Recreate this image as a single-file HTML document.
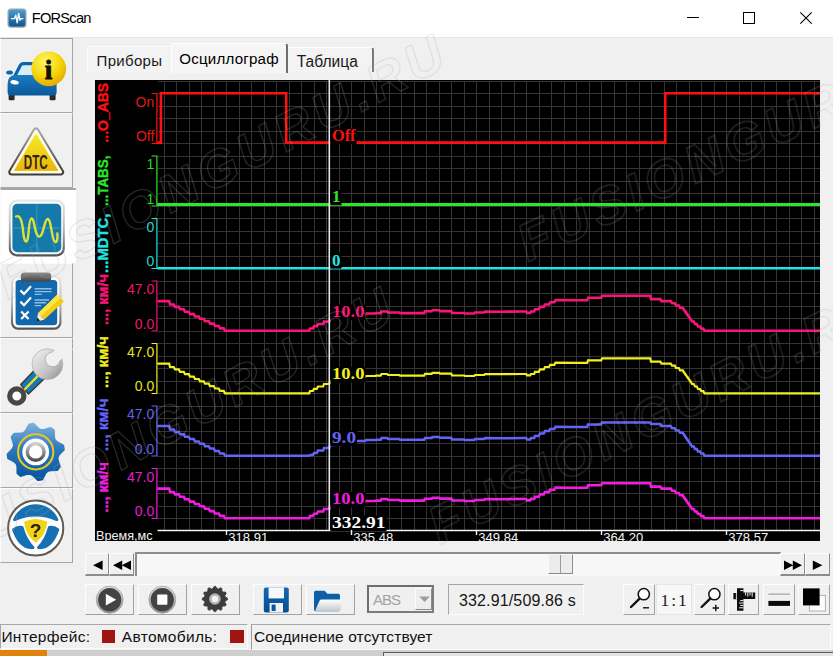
<!DOCTYPE html>
<html lang="ru">
<head>
<meta charset="utf-8">
<title>FORScan</title>
<style>
*{box-sizing:border-box;margin:0;padding:0}
html,body{width:833px;height:656px;overflow:hidden;background:#f0f0f0}
body{position:relative;font-family:"Liberation Sans",sans-serif;font-size:15px;color:#000}
.abs{position:absolute}
#titlebar{left:0;top:0;width:833px;height:37px;background:#fff}
#title{left:31.8px;top:9.6px;font-size:14.6px;line-height:17px;letter-spacing:-.75px;white-space:nowrap}
.sb{left:0;width:73px;height:75px;background:#f0f0f0;border-right:1.5px solid #a6a6a6;border-bottom:1.5px solid #a6a6a6;border-top:1px solid #fbfbfb;border-left:1px solid #fbfbfb}
.sb.sel{background:#fff;border-top:2px solid #a6a6a6;border-right:none;border-bottom:none;width:76px}
.tab{white-space:nowrap;font-size:15px;line-height:17px}
.tb{height:31px;background:#f0f0f0;border-top:1px solid #fdfdfd;border-left:1px solid #fdfdfd;border-right:1.5px solid #a3a3a3;border-bottom:1.5px solid #a3a3a3}
.sbtn{background:#f0f0f0;border-top:1px solid #fcfcfc;border-left:1px solid #fcfcfc;border-right:1.5px solid #8c8c8c;border-bottom:2px solid #8c8c8c}
.ax{font-family:"Liberation Sans",sans-serif;font-size:14px}
.vt{font-family:"Liberation Sans",sans-serif;font-size:14px;font-weight:bold;stroke-width:.35px}
.val{font-family:"Liberation Serif",serif;font-size:16px;font-weight:bold}
.tm{font-family:"Liberation Sans",sans-serif;font-size:12.5px}
.tm2{font-family:"Liberation Sans",sans-serif;font-size:13.5px}
.st{white-space:nowrap;font-size:15.5px;line-height:18px;color:#111}
</style>
</head>
<body>
<!-- title bar -->
<div id="titlebar" class="abs"></div>
<svg class="abs" style="left:0;top:0" width="833" height="38" viewBox="0 0 833 38">
  <defs>
    <linearGradient id="icg" x1="0" y1="0" x2="0" y2="1"><stop offset="0" stop-color="#4a9bd0"/><stop offset="1" stop-color="#0f5590"/></linearGradient>
  </defs>
  <rect x="7.5" y="8.6" width="19" height="19.2" rx="3.5" fill="#9aa4ae"/>
  <rect x="8.8" y="9.8" width="16.4" height="16.6" rx="2.6" fill="url(#icg)"/>
  <polyline points="11,18.6 14.5,18.6 15.8,15.2 17.2,22.8 18.6,13.4 20,20.2 21,18.6 23.4,18.6" fill="none" stroke="#fff" stroke-width="1.3" stroke-linejoin="round"/>
  <path d="M687 17.5H699" stroke="#000" stroke-width="1"/>
  <rect x="743.5" y="12.5" width="11" height="11" fill="none" stroke="#000" stroke-width="1"/>
  <path d="M800.3 12.3L811.7 23.7M811.7 12.3L800.3 23.7" stroke="#000" stroke-width="1.1"/>
  <rect x="0" y="37" width="833" height="1" fill="#e6e6e6"/>
</svg>
<div id="title" class="abs">FORScan</div>

<!-- sidebar buttons -->
<div class="abs sb" style="top:37.6px;height:75.4px;border-top:1.5px solid #9c9c9c"></div>
<div class="abs sb" style="top:113px"></div>
<div class="abs sb sel" style="top:188px"></div>
<div class="abs sb" style="top:263px"></div>
<div class="abs sb" style="top:338px"></div>
<div class="abs sb" style="top:413px"></div>
<div class="abs sb" style="top:488px"></div>
<svg class="abs" style="left:0;top:38px" width="76" height="526" viewBox="0 38 76 526">
<defs>
  <radialGradient id="yel" cx="0.4" cy="0.3" r="0.75"><stop offset="0" stop-color="#fff66a"/><stop offset="0.55" stop-color="#f6d80c"/><stop offset="1" stop-color="#e2a400"/></radialGradient>
  <linearGradient id="carb" x1="0" y1="0" x2="0" y2="1"><stop offset="0" stop-color="#1a7cc0"/><stop offset="1" stop-color="#0a589c"/></linearGradient>
  <linearGradient id="trio" x1="0" y1="0" x2="0" y2="1"><stop offset="0" stop-color="#a4a4aa"/><stop offset="1" stop-color="#3c3c40"/></linearGradient>
  <linearGradient id="tri" x1="0" y1="0" x2="0" y2="1"><stop offset="0" stop-color="#f6ec24"/><stop offset="1" stop-color="#eab40c"/></linearGradient>
  <linearGradient id="silv" x1="0" y1="0" x2="0" y2="1"><stop offset="0" stop-color="#e8e8e8"/><stop offset="0.5" stop-color="#b8b8b8"/><stop offset="1" stop-color="#505050"/></linearGradient>
  <linearGradient id="gearb" x1="0" y1="0" x2="0" y2="1"><stop offset="0" stop-color="#7ab0dc"/><stop offset="0.45" stop-color="#2a78bc"/><stop offset="1" stop-color="#06549c"/></linearGradient>
  <linearGradient id="wr" x1="0" y1="0" x2="1" y2="1"><stop offset="0" stop-color="#f4f4f4"/><stop offset="0.6" stop-color="#c4c4c4"/><stop offset="1" stop-color="#8a8a8a"/></linearGradient>
  <linearGradient id="clipg" x1="0" y1="0" x2="0" y2="1"><stop offset="0" stop-color="#8e8e8e"/><stop offset="1" stop-color="#444"/></linearGradient>
  <linearGradient id="ring" x1="0" y1="0" x2="0" y2="1"><stop offset="0" stop-color="#d0d0d0"/><stop offset="1" stop-color="#505050"/></linearGradient>
</defs>
<!-- 1: car + info -->
<g>
  <path d="M12.5 77 L19 64.5 Q20.2 62 23 62 L41 62 Q43.8 62 45 64.5 L51.5 77 Z" fill="#0d64a8"/>
  <path d="M17 75.5 L21.6 66.4 Q22.2 65.2 23.6 65.2 L40.4 65.2 Q41.8 65.2 42.4 66.4 L47 75.5 Z" fill="#d8eefa"/>
  <ellipse cx="9.6" cy="72.6" rx="3.4" ry="2" fill="#0d64a8"/>
  <rect x="8.6" y="92" width="6" height="8.3" rx="1.2" fill="#2a2a2a"/>
  <rect x="49.6" y="92" width="6" height="8.3" rx="1.2" fill="#2a2a2a"/>
  <path d="M7.6 84 Q7.6 75.5 15 75 L49 75 Q56.6 75.5 56.6 84 L56.6 92.5 Q56.6 95.6 53 95.6 L11 95.6 Q7.6 95.6 7.6 92.5 Z" fill="url(#carb)"/>
  <ellipse cx="14.6" cy="82.3" rx="4.2" ry="2.1" fill="#fff" transform="rotate(8 14.6 82.3)"/>
  <circle cx="48.7" cy="68.8" r="17.4" fill="url(#yel)"/>
  <text x="48.4" y="78.6" text-anchor="middle" font-family="Liberation Serif,serif" font-weight="bold" font-size="27" fill="#151005" stroke="#151005" stroke-width=".9">i</text>
</g>
<!-- 2: DTC triangle -->
<g>
  <path d="M36 131 L60.6 172 L11.8 172 Z" fill="#fffbe0" stroke="url(#trio)" stroke-width="7" stroke-linejoin="round"/>
  <path d="M36 131 L60.6 172 L11.8 172 Z" fill="url(#tri)" stroke="#fffce4" stroke-width="3" stroke-linejoin="round"/>
  <path d="M36 133.4 L58.4 170.8 L14 170.8 Z" fill="url(#tri)"/>
  <text x="35.8" y="168.6" text-anchor="middle" textLength="24" lengthAdjust="spacingAndGlyphs" font-family="Liberation Sans,sans-serif" font-weight="bold" font-size="19.5" fill="#33240c">DTC</text>
</g>
<!-- 3: scope -->
<g>
  <rect x="8.8" y="199.6" width="56" height="56.8" rx="8" fill="url(#silv)"/>
  <rect x="10.8" y="201.8" width="52" height="52.4" rx="6.5" fill="#fdfdfd"/>
  <rect x="12.4" y="203.8" width="48.8" height="48.4" rx="5" fill="#157aaa"/>
  <path d="M36.8 204V252M12.4 228H61.2" stroke="#4aa6c8" stroke-width="1" opacity=".7"/>
  <path d="M16 216.5 C20 214.5 22 221 23 230 C24 241 25.5 242.5 27 241 C29 238 28.5 219 31.5 218.5 C34.5 218 34.5 234.5 38.5 236.5 C43.5 238.5 44 219.5 47.5 219 C51.5 218.5 51.5 241 55.2 242 C57.4 242.5 57.6 238 57.4 233.5" fill="none" stroke="#dce238" stroke-width="2.4" stroke-linecap="round"/>
</g>
<!-- 4: clipboard + pencil -->
<g>
  <rect x="11" y="275.4" width="50.4" height="54.4" rx="7" fill="url(#silv)"/>
  <rect x="13" y="277.6" width="46.4" height="50" rx="5.5" fill="#fdfdfd"/>
  <rect x="15.6" y="280" width="41.6" height="45.2" rx="3.5" fill="#1268ac"/>
  <rect x="20.8" y="272.6" width="30.4" height="9" rx="3.4" fill="url(#clipg)"/>
  <path d="M20.4 290.4l3.6 3.6l7-7.8M20.4 301.6l3.6 3.6l7-7.8M21.2 311.4l7.4 7.6M28.6 311.4l-7.4 7.6" fill="none" stroke="#fff" stroke-width="2.2"/>
  <path d="M34.6 288.8H51.6M34.6 291.6H51.6M34.6 294.4H41.6M34.6 300H49M34.6 302.8H46M34.6 305.6H41" stroke="#8cc0e4" stroke-width="1.4"/>
  <path d="M57.4 294.6 L64 301.4 L44.4 319.6 L38 313.2 Z" fill="#f4cc10"/>
  <path d="M57.4 294.6 L60.6 297.9 L41 316.2 L38 313.2 Z" fill="#fbe54a"/>
  <path d="M38 313.2 L44.4 319.6 L36.6 321.8 Z" fill="#f2ead8"/>
  <path d="M37.3 317.6 L40 320.6 L36.4 322 Z" fill="#1a1a1a"/>
</g>
<!-- 5: wrench -->
<g>
  <path d="M9.4 389.6 L33.6 366.4 L45.6 378 L24.4 402.6 Z" fill="#444" stroke="#444" stroke-width="1" stroke-linejoin="round" opacity="0"/>
  <path d="M20.8 384.6 L36.4 368.2 L45.8 377.2 L28.4 394 Z" fill="#1a78ae" stroke="#3a3a3a" stroke-width="1.5" stroke-linejoin="round"/>
  <path d="M24.4 389.8 L41 372.6" stroke="#e6e02c" stroke-width="2.3"/>
  <circle cx="16.8" cy="396" r="7.1" fill="#fbfbfb" stroke="#474747" stroke-width="5.2"/>
  <circle cx="47.4" cy="364.2" r="15.4" fill="url(#wr)" stroke="#adadad" stroke-width=".7"/>
  <circle cx="52.6" cy="359.4" r="7.4" fill="#f0f0f0" stroke="#a6a6a6" stroke-width=".8"/>
  <path d="M56.1 363.5L72.9 349.4L66.0 341.1L49.1 355.3Z" fill="#f0f0f0"/>
</g>
<!-- 6: gear -->
<g>
    <path d="M24.1 433.0 L26.3 430.7 L29.4 424.7 L33.3 424.1 L38.1 428.8 L40.9 430.3 L44.0 430.2 L50.5 428.2 L53.6 430.5 L53.7 437.3 L54.6 440.3 L56.9 442.5 L62.9 445.6 L63.5 449.5 L58.8 454.3 L57.3 457.1 L57.4 460.2 L59.4 466.7 L57.1 469.8 L50.3 469.9 L47.3 470.8 L45.1 473.1 L42.0 479.1 L38.1 479.7 L33.3 475.0 L30.5 473.5 L27.4 473.6 L20.9 475.6 L17.8 473.3 L17.7 466.5 L16.8 463.5 L14.5 461.3 L8.5 458.2 L7.9 454.3 L12.6 449.5 L14.1 446.7 L14.0 443.6 L12.0 437.1 L14.3 434.0 L21.1 433.9Z" fill="url(#gearb)" stroke="url(#gearb)" stroke-width="2.6" stroke-linejoin="round"/>
  <circle cx="35.7" cy="451.9" r="17.6" fill="none" stroke="#e8c428" stroke-width="2.1"/>
  <circle cx="35.7" cy="451.9" r="13.4" fill="#fafcff"/>
  <circle cx="35.7" cy="451.9" r="8.4" fill="#fdfdfd" stroke="url(#ring)" stroke-width="3.4"/>
</g>
<!-- 7: steering wheel -->
<g>
  <circle cx="35.7" cy="528" r="27.6" fill="#fdfdfd" stroke="#5e5854" stroke-width="2"/>
  <path d="M14.6 519.6 A23 23 0 0 1 56.8 519.6 Q36 510.4 14.6 519.6 Z" fill="#1570b4" stroke="#1570b4" stroke-width="3" stroke-linejoin="round"/>
  <path d="M13.6 529.6 Q17.5 526.4 22 527.4 Q25.5 540 33 547.6 Q20 548.6 13.6 529.6 Z" fill="#1570b4" stroke="#1570b4" stroke-width="3" stroke-linejoin="round"/>
  <path d="M57.8 529.6 Q54 526.4 49.4 527.4 Q46 540 38.6 547.6 Q51.4 548.6 57.8 529.6 Z" fill="#1570b4" stroke="#1570b4" stroke-width="3" stroke-linejoin="round"/>
  <path d="M25.2 522.4 Q35.7 517.4 46.2 522.4 Q44.6 534.6 35.7 541.4 Q26.8 534.6 25.2 522.4 Z" fill="#f2d416" stroke="#f2d416" stroke-width="2" stroke-linejoin="round"/>
  <text x="35.6" y="536.8" text-anchor="middle" font-family="Liberation Sans,sans-serif" font-weight="bold" font-size="19" fill="#2a2008">?</text>
</g>
</svg>


<!-- tabs -->
<div class="abs" style="left:87px;top:46px;width:84px;height:26px;background:#f3f3f3;border-top:1.5px solid #fdfdfd;border-left:1.5px solid #fdfdfd;border-radius:3px 0 0 0"></div>
<div class="abs" style="left:288px;top:46.5px;width:86px;height:25px;background:#f3f3f3;border-top:1.5px solid #fdfdfd;border-right:2px solid #7a7a7a;border-radius:0 3px 0 0"></div>
<div class="abs" style="left:170.5px;top:42.5px;width:117.5px;height:30px;background:#f5f5f5;border-top:1.5px solid #fff;border-left:1.5px solid #fff;border-right:2px solid #6e6e6e;border-radius:3px 3px 0 0"></div>
<div class="abs tab" style="left:96.6px;top:51.6px;color:#1a1a1a;letter-spacing:.3px">Приборы</div>
<div class="abs tab" style="left:179.2px;top:50.3px;font-size:15.1px;letter-spacing:.22px">Осциллограф</div>
<div class="abs tab" style="left:296.8px;top:53.2px;font-size:15.6px;color:#1a1a1a">Таблица</div>

<svg id="chart" width="725" height="461" viewBox="95 80 725 461" style="position:absolute;left:95px;top:80px">
<rect x="95" y="80" width="725" height="461" fill="#000"/>
<path d="M164.0 81V530.5M176.5 81V530.5M189.0 81V530.5M201.5 81V530.5M214.0 81V530.5M226.5 81V530.5M239.0 81V530.5M251.5 81V530.5M264.0 81V530.5M276.5 81V530.5M289.0 81V530.5M301.5 81V530.5M314.0 81V530.5M326.5 81V530.5M339.0 81V530.5M351.5 81V530.5M364.0 81V530.5M376.5 81V530.5M389.0 81V530.5M401.5 81V530.5M414.0 81V530.5M426.5 81V530.5M439.0 81V530.5M451.5 81V530.5M464.0 81V530.5M476.5 81V530.5M489.0 81V530.5M501.5 81V530.5M514.0 81V530.5M526.5 81V530.5M539.0 81V530.5M551.5 81V530.5M564.0 81V530.5M576.5 81V530.5M589.0 81V530.5M601.5 81V530.5M614.0 81V530.5M626.5 81V530.5M639.0 81V530.5M651.5 81V530.5M664.0 81V530.5M676.5 81V530.5M689.0 81V530.5M701.5 81V530.5M714.0 81V530.5M726.5 81V530.5M739.0 81V530.5M751.5 81V530.5M764.0 81V530.5M776.5 81V530.5M789.0 81V530.5M801.5 81V530.5M814.0 81V530.5M158 81.00H820M158 93.50H820M158 106.00H820M158 118.50H820M158 131.00H820M158 143.50H820M158 156.00H820M158 168.50H820M158 181.00H820M158 193.50H820M158 206.00H820M158 218.50H820M158 231.00H820M158 243.50H820M158 256.00H820M158 268.50H820M158 281.00H820M158 293.50H820M158 306.00H820M158 318.50H820M158 331.00H820M158 343.50H820M158 356.00H820M158 368.50H820M158 381.00H820M158 393.50H820M158 406.00H820M158 418.50H820M158 431.00H820M158 443.50H820M158 456.00H820M158 468.50H820M158 481.00H820M158 493.50H820M158 506.00H820M158 518.50H820M158 531.00H820" stroke="#343434" stroke-width="1" fill="none" shape-rendering="crispEdges"/>
<path d="M151.5 93.5H156.9V143.5H151.5" stroke="#ff1010" stroke-width="1.2" fill="none"/>
<text x="154.3" y="106.9" text-anchor="end" fill="#e01818" class="ax">On</text>
<text x="154.3" y="141.0" text-anchor="end" fill="#e01818" class="ax">Off</text>
<path d="M151.5 156H156.9V206H151.5" stroke="#28e828" stroke-width="1.2" fill="none"/>
<text x="154.3" y="169.4" text-anchor="end" fill="#28d828" class="ax">1</text>
<text x="154.3" y="203.5" text-anchor="end" fill="#28d828" class="ax">1</text>
<path d="M151.5 218.5H156.9V268.5H151.5" stroke="#20e4e4" stroke-width="1.2" fill="none"/>
<text x="154.3" y="231.9" text-anchor="end" fill="#20d4d4" class="ax">0</text>
<text x="154.3" y="266.0" text-anchor="end" fill="#20d4d4" class="ax">0</text>
<path d="M151.5 281H156.9V331H151.5" stroke="#f81478" stroke-width="1.2" fill="none"/>
<text x="154.3" y="294.4" text-anchor="end" fill="#e8186c" class="ax">47.0</text>
<text x="154.3" y="328.5" text-anchor="end" fill="#e8186c" class="ax">0.0</text>
<path d="M151.5 343.5H156.9V393.5H151.5" stroke="#f0f020" stroke-width="1.2" fill="none"/>
<text x="154.3" y="356.9" text-anchor="end" fill="#e4e420" class="ax">47.0</text>
<text x="154.3" y="391.0" text-anchor="end" fill="#e4e420" class="ax">0.0</text>
<path d="M151.5 406H156.9V456H151.5" stroke="#6464f4" stroke-width="1.2" fill="none"/>
<text x="154.3" y="419.4" text-anchor="end" fill="#6060e8" class="ax">47.0</text>
<text x="154.3" y="453.5" text-anchor="end" fill="#6060e8" class="ax">0.0</text>
<path d="M151.5 468.5H156.9V518.5H151.5" stroke="#f01ce0" stroke-width="1.2" fill="none"/>
<text x="154.3" y="481.9" text-anchor="end" fill="#e41cd4" class="ax">47.0</text>
<text x="154.3" y="516.0" text-anchor="end" fill="#e41cd4" class="ax">0.0</text>
<text transform="translate(107.6 142.5) rotate(-90)" textLength="59.5" lengthAdjust="spacingAndGlyphs" fill="#ff1010" stroke="#ff1010" class="vt">...O_ABS</text>
<text transform="translate(107.6 206) rotate(-90)" textLength="50.5" lengthAdjust="spacingAndGlyphs" fill="#28e828" stroke="#28e828" class="vt">...TABS,</text>
<text transform="translate(107.6 273) rotate(-90)" textLength="59.5" lengthAdjust="spacingAndGlyphs" fill="#20e4e4" stroke="#20e4e4" class="vt">...MDTC,</text>
<text transform="translate(107.6 325) rotate(-90)" textLength="51.0" lengthAdjust="spacingAndGlyphs" fill="#f81478" stroke="#f81478" class="vt">..., км/ч</text>
<text transform="translate(107.6 388) rotate(-90)" textLength="52.0" lengthAdjust="spacingAndGlyphs" fill="#f0f020" stroke="#f0f020" class="vt">..., км/ч</text>
<text transform="translate(107.6 451) rotate(-90)" textLength="52.5" lengthAdjust="spacingAndGlyphs" fill="#6464f4" stroke="#6464f4" class="vt">..., км/ч</text>
<text transform="translate(107.6 512.5) rotate(-90)" textLength="50.5" lengthAdjust="spacingAndGlyphs" fill="#f01ce0" stroke="#f01ce0" class="vt">..., км/ч</text>
<polyline points="157.2,142.6 160.9,142.6 160.9,93.3 286.2,93.3 286.2,142.6 665.2,142.6 665.2,93.3 820,93.3" stroke="#ff1010" stroke-width="2.6" fill="none" stroke-linejoin="miter"/>
<path d="M157.3 204.5H820" stroke="#28e828" stroke-width="3"/>
<path d="M157.3 268.3H820" stroke="#20e4e4" stroke-width="2.6"/>
<polyline points="157.3,301.1 163.0,301.1 169.2,301.1 170.0,304.5 173.8,304.5 175.0,306.9 178.8,306.9 180.0,309.3 183.8,309.3 185.0,311.7 188.8,311.7 190.0,314.1 193.8,314.1 195.0,316.5 198.8,316.5 200.0,318.8 203.8,318.8 205.0,321.2 208.8,321.2 210.0,323.6 213.8,323.6 215.0,326.0 218.8,326.0 220.0,328.4 223.8,328.4 225.0,330.8 304.0,330.8 309.2,330.8 310.0,328.5 312.8,328.5 314.0,326.2 316.8,326.2 318.0,324.0 323.2,324.0 324.0,321.5 329.2,321.5 330.0,318.5 335.2,318.5 336.0,317.1 343.2,317.1 344.0,315.5 353.2,315.5 354.0,314.3 365.2,314.3 366.0,313.5 375.2,313.5 376.0,313.1 380.7,313.1 381.5,311.5 387.2,311.5 388.0,312.5 399.2,312.5 400.0,313.1 415.0,313.1 424.2,313.1 425.0,311.3 431.7,311.3 432.5,310.3 439.2,310.3 440.0,311.1 451.2,311.1 452.0,313.0 464.2,313.0 465.0,313.5 474.2,313.5 475.0,312.5 484.2,312.5 485.0,311.5 500.0,311.7 523.0,311.5 526.2,311.5 527.0,312.9 530.2,312.9 531.0,311.5 534.2,311.5 535.0,309.3 538.8,309.3 540.0,306.9 543.8,306.9 545.0,304.5 549.0,304.5 550.2,302.3 554.3,302.3 555.5,300.1 576.0,300.3 587.2,300.3 588.0,297.8 601.2,297.8 602.0,295.8 637.0,295.8 650.2,295.8 651.0,299.1 660.3,299.1 661.5,301.1 670.8,301.1 672.0,303.2 674.8,303.2 676.0,305.5 678.8,305.5 680.0,307.8 682.8,307.8 684.0,310.1 684.4,310.1 685.6,312.4 686.0,312.4 687.2,314.7 687.6,314.7 688.8,316.9 689.2,316.9 690.4,319.2 690.8,319.2 692.0,321.5 693.8,321.5 695.0,324.0 696.8,324.0 698.0,326.5 700.0,326.5 701.2,328.6 703.3,328.6 704.5,330.8 820.0,330.8" stroke="#f81478" stroke-width="2.6" fill="none" stroke-linejoin="miter"/>
<polyline points="157.3,363.6 163.0,363.6 169.2,363.6 170.0,367.0 173.8,367.0 175.0,369.4 178.8,369.4 180.0,371.8 183.8,371.8 185.0,374.2 188.8,374.2 190.0,376.6 193.8,376.6 195.0,379.0 198.8,379.0 200.0,381.3 203.8,381.3 205.0,383.7 208.8,383.7 210.0,386.1 213.8,386.1 215.0,388.5 218.8,388.5 220.0,390.9 223.8,390.9 225.0,393.3 304.0,393.3 309.2,393.3 310.0,391.0 312.8,391.0 314.0,388.8 316.8,388.8 318.0,386.5 323.2,386.5 324.0,384.0 329.2,384.0 330.0,381.0 335.2,381.0 336.0,379.6 343.2,379.6 344.0,378.0 353.2,378.0 354.0,376.8 365.2,376.8 366.0,376.0 375.2,376.0 376.0,375.6 380.7,375.6 381.5,374.0 387.2,374.0 388.0,375.0 399.2,375.0 400.0,375.6 415.0,375.6 424.2,375.6 425.0,373.8 431.7,373.8 432.5,372.8 439.2,372.8 440.0,373.6 451.2,373.6 452.0,375.5 464.2,375.5 465.0,376.0 474.2,376.0 475.0,375.0 484.2,375.0 485.0,374.0 500.0,374.2 523.0,374.0 526.2,374.0 527.0,375.4 530.2,375.4 531.0,374.0 534.2,374.0 535.0,371.8 538.8,371.8 540.0,369.4 543.8,369.4 545.0,367.0 549.0,367.0 550.2,364.8 554.3,364.8 555.5,362.6 576.0,362.8 587.2,362.8 588.0,360.3 601.2,360.3 602.0,358.3 637.0,358.3 650.2,358.3 651.0,361.6 660.3,361.6 661.5,363.6 670.8,363.6 672.0,365.7 674.8,365.7 676.0,368.0 678.8,368.0 680.0,370.3 682.8,370.3 684.0,372.6 684.4,372.6 685.6,374.9 686.0,374.9 687.2,377.2 687.6,377.2 688.8,379.4 689.2,379.4 690.4,381.7 690.8,381.7 692.0,384.0 693.8,384.0 695.0,386.5 696.8,386.5 698.0,389.0 700.0,389.0 701.2,391.1 703.3,391.1 704.5,393.3 820.0,393.3" stroke="#f0f020" stroke-width="2.2" fill="none" stroke-linejoin="miter"/>
<polyline points="157.3,426.1 163.0,426.1 169.2,426.1 170.0,429.5 173.8,429.5 175.0,431.9 178.8,431.9 180.0,434.3 183.8,434.3 185.0,436.7 188.8,436.7 190.0,439.1 193.8,439.1 195.0,441.5 198.8,441.5 200.0,443.8 203.8,443.8 205.0,446.2 208.8,446.2 210.0,448.6 213.8,448.6 215.0,451.0 218.8,451.0 220.0,453.4 223.8,453.4 225.0,455.8 304.0,455.8 309.2,455.8 310.0,455.1 312.8,455.1 314.0,452.9 316.8,452.9 318.0,450.6 323.2,450.6 324.0,448.1 329.2,448.1 330.0,445.1 335.2,445.1 336.0,443.7 343.2,443.7 344.0,442.1 353.2,442.1 354.0,440.9 365.2,440.9 366.0,440.1 375.2,440.1 376.0,439.7 380.7,439.7 381.5,438.1 387.2,438.1 388.0,439.1 399.2,439.1 400.0,439.7 415.0,439.7 424.2,439.7 425.0,437.9 431.7,437.9 432.5,436.9 439.2,436.9 440.0,437.7 451.2,437.7 452.0,439.6 464.2,439.6 465.0,440.1 474.2,440.1 475.0,439.1 484.2,439.1 485.0,438.1 500.0,438.3 523.0,438.1 526.2,438.1 527.0,439.5 530.2,439.5 531.0,438.1 534.2,438.1 535.0,435.9 538.8,435.9 540.0,433.5 543.8,433.5 545.0,431.1 549.0,431.1 550.2,428.9 554.3,428.9 555.5,426.7 576.0,426.9 587.2,426.9 588.0,424.4 601.2,424.4 602.0,422.4 637.0,422.4 650.2,422.4 651.0,424.1 660.3,424.1 661.5,426.1 670.8,426.1 672.0,428.2 674.8,428.2 676.0,430.5 678.8,430.5 680.0,432.8 682.8,432.8 684.0,435.1 684.4,435.1 685.6,437.4 686.0,437.4 687.2,439.7 687.6,439.7 688.8,441.9 689.2,441.9 690.4,444.2 690.8,444.2 692.0,446.5 693.8,446.5 695.0,449.0 696.8,449.0 698.0,451.5 700.0,451.5 701.2,453.6 703.3,453.6 704.5,455.8 820.0,455.8" stroke="#6464f4" stroke-width="2.5" fill="none" stroke-linejoin="miter"/>
<polyline points="157.3,488.6 163.0,488.6 169.2,488.6 170.0,492.0 173.8,492.0 175.0,494.4 178.8,494.4 180.0,496.8 183.8,496.8 185.0,499.2 188.8,499.2 190.0,501.6 193.8,501.6 195.0,504.0 198.8,504.0 200.0,506.3 203.8,506.3 205.0,508.7 208.8,508.7 210.0,511.1 213.8,511.1 215.0,513.5 218.8,513.5 220.0,515.9 223.8,515.9 225.0,518.3 304.0,518.3 309.2,518.3 310.0,516.0 312.8,516.0 314.0,513.8 316.8,513.8 318.0,511.5 323.2,511.5 324.0,509.0 329.2,509.0 330.0,506.0 335.2,506.0 336.0,504.6 343.2,504.6 344.0,503.0 353.2,503.0 354.0,501.8 365.2,501.8 366.0,501.0 375.2,501.0 376.0,500.6 380.7,500.6 381.5,499.0 387.2,499.0 388.0,500.0 399.2,500.0 400.0,500.6 415.0,500.6 424.2,500.6 425.0,498.8 431.7,498.8 432.5,497.8 439.2,497.8 440.0,498.6 451.2,498.6 452.0,500.5 464.2,500.5 465.0,501.0 474.2,501.0 475.0,500.0 484.2,500.0 485.0,499.0 500.0,499.2 523.0,499.0 526.2,499.0 527.0,500.4 530.2,500.4 531.0,499.0 534.2,499.0 535.0,496.8 538.8,496.8 540.0,494.4 543.8,494.4 545.0,492.0 549.0,492.0 550.2,489.8 554.3,489.8 555.5,487.6 576.0,487.8 587.2,487.8 588.0,485.3 601.2,485.3 602.0,483.3 637.0,483.3 650.2,483.3 651.0,486.6 660.3,486.6 661.5,488.6 670.8,488.6 672.0,490.7 674.8,490.7 676.0,493.0 678.8,493.0 680.0,495.3 682.8,495.3 684.0,497.6 684.4,497.6 685.6,499.9 686.0,499.9 687.2,502.2 687.6,502.2 688.8,504.4 689.2,504.4 690.4,506.7 690.8,506.7 692.0,509.0 693.8,509.0 695.0,511.5 696.8,511.5 698.0,514.0 700.0,514.0 701.2,516.1 703.3,516.1 704.5,518.3 820.0,518.3" stroke="#f01ce0" stroke-width="2.6" fill="none" stroke-linejoin="miter"/>
<rect x="95" y="531" width="725" height="10" fill="#000"/>
<path d="M157.5 530.5H820" stroke="#f4f4f4" stroke-width="1.4"/>
<path d="M329.3 80V530" stroke="#e8e8e8" stroke-width="1.6"/>
<rect x="330.4" y="128.8" width="26.1" height="15.5" fill="#000"/>
<text x="332" y="141.3" textLength="23.5" lengthAdjust="spacingAndGlyphs" fill="#ff1010" class="val">Off</text>
<rect x="330.4" y="189.8" width="11.1" height="15.5" fill="#000"/>
<text x="332" y="202.3" textLength="8.5" lengthAdjust="spacingAndGlyphs" fill="#28e828" class="val">1</text>
<rect x="330.4" y="253.1" width="11.1" height="15.5" fill="#000"/>
<text x="332" y="265.6" textLength="8.5" lengthAdjust="spacingAndGlyphs" fill="#20e4e4" class="val">0</text>
<rect x="330.4" y="304.5" width="35.1" height="15.5" fill="#000"/>
<text x="332" y="317" textLength="32.5" lengthAdjust="spacingAndGlyphs" fill="#f81478" class="val">10.0</text>
<rect x="330.4" y="366.9" width="35.1" height="15.5" fill="#000"/>
<text x="332" y="379.4" textLength="32.5" lengthAdjust="spacingAndGlyphs" fill="#f0f020" class="val">10.0</text>
<rect x="330.4" y="430.5" width="26.6" height="15.5" fill="#000"/>
<text x="332" y="443" textLength="24" lengthAdjust="spacingAndGlyphs" fill="#6464f4" class="val">9.0</text>
<rect x="330.4" y="491.9" width="35.1" height="15.5" fill="#000"/>
<text x="332" y="504.4" textLength="32.5" lengthAdjust="spacingAndGlyphs" fill="#f01ce0" class="val">10.0</text>
<rect x="330.4" y="515.7" width="56.1" height="15.5" fill="#000"/>
<text x="332" y="528.2" textLength="53.5" lengthAdjust="spacingAndGlyphs" fill="#ffffff" class="val">332.91</text>
<text x="96" y="539.6" textLength="56.5" lengthAdjust="spacingAndGlyphs" fill="#f4f4f4" class="tm">Время,мс</text>
<path d="M226.5 530V535" stroke="#f4f4f4" stroke-width="1.4"/>
<text x="228.3" y="542.3" textLength="40" lengthAdjust="spacingAndGlyphs" fill="#f4f4f4" class="tm2">318.91</text>
<path d="M351.5 530V535" stroke="#f4f4f4" stroke-width="1.4"/>
<text x="353.3" y="542.3" textLength="40" lengthAdjust="spacingAndGlyphs" fill="#f4f4f4" class="tm2">335.48</text>
<path d="M476.5 530V535" stroke="#f4f4f4" stroke-width="1.4"/>
<text x="478.3" y="542.3" textLength="40" lengthAdjust="spacingAndGlyphs" fill="#f4f4f4" class="tm2">349.84</text>
<path d="M601.5 530V535" stroke="#f4f4f4" stroke-width="1.4"/>
<text x="603.3" y="542.3" textLength="40" lengthAdjust="spacingAndGlyphs" fill="#f4f4f4" class="tm2">364.20</text>
<path d="M726.5 530V535" stroke="#f4f4f4" stroke-width="1.4"/>
<text x="728.3" y="542.3" textLength="40" lengthAdjust="spacingAndGlyphs" fill="#f4f4f4" class="tm2">378.57</text>
</svg>

<!-- scrollbar row -->
<div class="abs" style="left:135px;top:551.5px;width:646px;height:24px;background:#f7f7f7;border-top:2px solid #8e8e8e;border-left:2px solid #8e8e8e"></div>
<div class="abs sbtn" style="left:85px;top:552.5px;width:23.5px;height:23px"></div>
<div class="abs sbtn" style="left:109px;top:552.5px;width:25px;height:23px"></div>
<div class="abs sbtn" style="left:779.6px;top:552.5px;width:25.4px;height:23px"></div>
<div class="abs sbtn" style="left:805px;top:552.5px;width:24.5px;height:23px"></div>
<div class="abs" style="left:547.5px;top:553.5px;width:25.5px;height:20.5px;background:#ececec;border-top:1px solid #fafafa;border-left:1px solid #fafafa;border-right:1.5px solid #8c8c8c;border-bottom:1.5px solid #8c8c8c"></div>
<div class="abs" style="left:559.6px;top:554.5px;width:1.4px;height:18px;background:#9a9a9a"></div>
<svg class="abs" style="left:80px;top:550px" width="753" height="28" viewBox="80 550 753 28">
  <path d="M93 565.2L102.6 560.4V570Z" fill="#000"/>
  <path d="M113 565.2L122.2 560.4V570ZM121.8 565.2L131 560.4V570Z" fill="#000"/>
  <path d="M784 560.4L793.2 565.2L784 570ZM792.8 560.4L802 565.2L792.8 570Z" fill="#000"/>
  <path d="M812.8 560.4L822.4 565.2L812.8 570Z" fill="#000"/>
</svg>


<!-- toolbar -->
<div class="abs tb" style="left:85px;top:584.3px;width:49.4px"></div>
<div class="abs tb" style="left:138px;top:584.3px;width:48.6px"></div>
<div class="abs tb" style="left:190.7px;top:584.3px;width:49px"></div>
<div class="abs tb" style="left:253px;top:584.3px;width:49px"></div>
<div class="abs tb" style="left:306.2px;top:584.3px;width:48.8px"></div>
<div class="abs" style="left:367.4px;top:585.2px;width:67px;height:27.4px;background:#f0f0f0;border-top:2px solid #6e6e6e;border-left:2px solid #6e6e6e;border-right:2px solid #7c7c7c;border-bottom:2px solid #7c7c7c"></div>
<div class="abs" style="left:414.5px;top:588px;width:17.6px;height:22.4px;background:#eeeeee;border-top:1px solid #fcfcfc;border-left:1px solid #fcfcfc;border-right:1.5px solid #8a8a8a;border-bottom:1.5px solid #8a8a8a"></div>
<div class="abs" style="left:373px;top:591px;font-size:15px;line-height:18px;color:#a2a2a2;letter-spacing:-1px">ABS</div>
<div class="abs" style="left:448px;top:583.6px;width:135.5px;height:31.6px;background:#f0f0f0;border-top:1.5px solid #a6a6a6;border-left:1.5px solid #a6a6a6;border-right:1.5px solid #fcfcfc;border-bottom:1.5px solid #fcfcfc"></div>
<div class="abs" style="left:459px;top:592.3px;font-size:16px;line-height:18px;color:#161616;white-space:nowrap;letter-spacing:.14px">332.91/509.86 s</div>
<div class="abs tb" style="left:623.3px;top:584.4px;width:31.4px;height:30.6px"></div>
<div class="abs" style="left:655.6px;top:584.4px;width:36px;height:30.6px;background:#f7f7f7;border:1px solid #e6e6e6"></div>
<div class="abs tb" style="left:693.6px;top:584.4px;width:31.2px;height:30.6px"></div>
<div class="abs tb" style="left:728.2px;top:584.4px;width:31.2px;height:30.6px"></div>
<div class="abs tb" style="left:763.4px;top:584.4px;width:31.2px;height:30.6px"></div>
<div class="abs tb" style="left:798.4px;top:584.4px;width:32px;height:30.6px"></div>
<div class="abs" style="left:660.4px;top:590.4px;font-family:'Liberation Serif',serif;font-size:17.5px;line-height:20px;color:#241a22;white-space:nowrap;letter-spacing:2px">1:1</div>
<svg class="abs" style="left:80px;top:580px" width="753" height="40" viewBox="80 580 753 40">
<defs>
  <linearGradient id="pring" x1="0" y1="0" x2="0" y2="1"><stop offset="0" stop-color="#e2e2e2"/><stop offset="1" stop-color="#8e8e8e"/></linearGradient>
  <linearGradient id="flop" x1="0" y1="0" x2="0" y2="1"><stop offset="0" stop-color="#1368b4"/><stop offset="1" stop-color="#084c90"/></linearGradient>
  <linearGradient id="fold" x1="0" y1="0" x2="0" y2="1"><stop offset="0" stop-color="#ffffff"/><stop offset="1" stop-color="#c4c8cc"/></linearGradient>
</defs>
<!-- play -->
<circle cx="109.7" cy="599.7" r="13.5" fill="url(#pring)" stroke="#9a9a9a" stroke-width=".7"/>
<circle cx="109.7" cy="599.7" r="11.6" fill="#434343"/>
<path d="M105.8 593.8L116.2 599.7L105.8 605.6Z" fill="#fff"/>
<!-- stop -->
<circle cx="162.3" cy="599.7" r="13.5" fill="url(#pring)" stroke="#9a9a9a" stroke-width=".7"/>
<circle cx="162.3" cy="599.7" r="11.6" fill="#434343"/>
<rect x="157.2" y="594.6" width="10.2" height="10.2" rx=".8" fill="#fff"/>
<!-- gear -->
<path d="M214.1 586.4 L215.7 586.4 L217.0 588.6 L218.3 589.0 L220.5 587.7 L221.9 588.5 L221.9 591.0 L222.9 592.0 L225.4 592.0 L226.2 593.4 L224.9 595.6 L225.3 596.9 L227.5 598.2 L227.5 599.8 L225.3 601.1 L224.9 602.4 L226.2 604.6 L225.4 606.0 L222.9 606.0 L221.9 607.0 L221.9 609.5 L220.5 610.3 L218.3 609.0 L217.0 609.4 L215.7 611.6 L214.1 611.6 L212.8 609.4 L211.5 609.0 L209.3 610.3 L207.9 609.5 L207.9 607.0 L206.9 606.0 L204.4 606.0 L203.6 604.6 L204.9 602.4 L204.5 601.1 L202.3 599.8 L202.3 598.2 L204.5 596.9 L204.9 595.6 L203.6 593.4 L204.4 592.0 L206.9 592.0 L207.9 591.0 L207.9 588.5 L209.3 587.7 L211.5 589.0 L212.8 588.6Z" fill="#3c3c3c" stroke="#3c3c3c" stroke-width=".8" stroke-linejoin="round"/>
<circle cx="214.9" cy="599" r="5.8" fill="#b4b4b4"/>
<circle cx="214.9" cy="599" r="3.2" fill="#f4f4f4"/>
<!-- floppy -->
<path d="M266 587.4H286.6Q288.8 587.4 288.8 589.6V610.2Q288.8 612.4 286.6 612.4H266Q263.8 612.4 263.8 610.2V589.6Q263.8 587.4 266 587.4Z" fill="url(#flop)"/>
<rect x="268.6" y="587.4" width="15.4" height="11" fill="#f6f8fa"/>
<rect x="269.6" y="603" width="13.4" height="9.4" fill="#f0f2f4"/>
<rect x="271.6" y="604.6" width="4" height="6.4" fill="#0c549a"/>
<!-- folder -->
<path d="M315.6 590.8H324.6L327.4 593.8H338.4Q340 593.8 340 595.4V609.6Q340 611.2 338.4 611.2H315.6Q314 611.2 314 609.6V592.4Q314 590.8 315.6 590.8Z" fill="#0e5ea6"/>
<path d="M321.6 599.6H340.4Q342 599.6 341.8 601.2L340.6 609.8Q340.4 611.2 338.8 611.2H316.4Q315 611.2 315.6 609.6L319.6 600.8Q320.2 599.6 321.6 599.6Z" fill="url(#fold)"/>
<!-- combo arrow -->
<path d="M419.4 596.6H429.8L424.6 602Z" fill="#9c9c9c"/>
<!-- zoom out -->
<circle cx="643.8" cy="594.2" r="5.6" fill="#fdfdfd" stroke="#111" stroke-width="1.5"/>
<path d="M639.6 598.6L631 607" stroke="#111" stroke-width="2.4" stroke-linecap="round"/>
<path d="M643 607.8H649" stroke="#111" stroke-width="1.4"/>
<!-- zoom in -->
<circle cx="714.4" cy="594.2" r="5.6" fill="#fdfdfd" stroke="#111" stroke-width="1.5"/>
<path d="M710.2 598.6L701.6 607" stroke="#111" stroke-width="2.4" stroke-linecap="round"/>
<path d="M712.6 608H719M715.8 604.8V611.2" stroke="#111" stroke-width="1.4"/>
<!-- ruler -->
<path d="M737 588.2H743.4V592.4H755.2V599H743.4V610.8H737V599.2H733.4V593H737Z" fill="#0c0c0c"/>
<path d="M745.6 592.4V595.4M747.8 592.4V596.6M750 592.4V595.4M752.2 592.4V596.6M740.2 600.6H743.4M739 603H743.4M740.2 605.4H743.4M739 607.8H743.4M740.2 590.6H743.4" stroke="#f0f0f0" stroke-width="1"/>
<path d="M736.4 592.6V599.4" stroke="#f0f0f0" stroke-width=".9"/>
<!-- lines -->
<path d="M768.4 594.2H790" stroke="#b4b4b4" stroke-width="1.6"/>
<path d="M768.4 603.4H790" stroke="#0a0a0a" stroke-width="5"/>
<!-- colors -->
<rect x="809.4" y="595.4" width="16" height="15.6" fill="#fdfdfd" stroke="#b0b0b0" stroke-width="1"/>
<rect x="803" y="588.4" width="16.6" height="17" fill="#000"/>
</svg>


<!-- status bar -->
<div class="abs" style="left:0;top:623.6px;width:247.6px;height:25px;border-top:1.5px solid #a8a8a8;border-left:1px solid #a8a8a8;border-right:1.5px solid #fcfcfc;border-bottom:1.5px solid #fcfcfc"></div>
<div class="abs" style="left:250.6px;top:623.6px;width:580px;height:26.4px;border-top:1.5px solid #a8a8a8;border-left:1.5px solid #9a9a9a;border-bottom:1.5px solid #fcfcfc;border-right:1.5px solid #fcfcfc"></div>
<div class="abs st" style="left:1.4px;top:628.4px;letter-spacing:.3px">Интерфейс:</div>
<div class="abs" style="left:102px;top:629.8px;width:13.2px;height:13.2px;background:#a01414"></div>
<div class="abs st" style="left:121.8px;top:628.4px;letter-spacing:.32px">Автомобиль:</div>
<div class="abs" style="left:230.2px;top:629.8px;width:13.4px;height:13.2px;background:#a01414"></div>
<div class="abs st" style="left:254px;top:628.4px;letter-spacing:.1px">Соединение отсутствует</div>
<!-- bottom strip -->
<div class="abs" style="left:0;top:649.6px;width:833px;height:7px;background:#cfcfcf"></div>
<div class="abs" style="left:0;top:650.4px;width:47px;height:6px;background:#e0820c"></div>
<div class="abs" style="left:383.4px;top:651.8px;width:450px;height:5px;background:#e4e4e4;border-top:1.4px solid #5c5c5c;border-left:1.4px solid #5c5c5c"></div>

<!-- watermark -->
<svg class="abs" style="left:0;top:0;pointer-events:none" width="833" height="656" viewBox="0 0 833 656">
<g font-family="Liberation Sans,sans-serif" font-weight="bold" font-style="italic" font-size="52" fill="none" stroke="#a8a8a8" stroke-width="1.3" opacity=".23" letter-spacing="5">
  <text transform="translate(8 300) rotate(-28)">FUSIONGURU.RU</text>
  <text transform="translate(-40 560) rotate(-29)">FUSIONGURU.RU</text>
  <text transform="translate(528 262) rotate(-25)">FUSIONGURU.RU</text>
  <text transform="translate(440 545) rotate(-27)">FUSIONGURU.RU</text>
</g>
</svg>

</body>
</html>
